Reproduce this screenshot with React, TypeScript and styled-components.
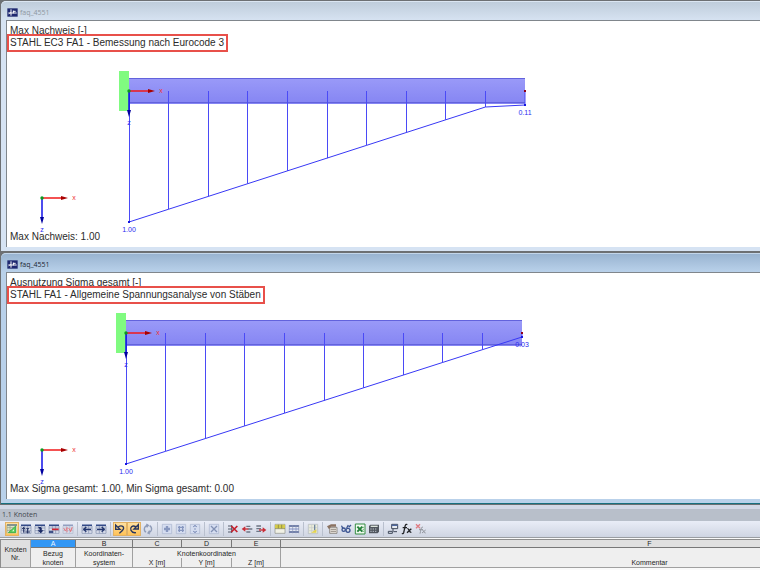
import React from "react";
import styled, { createGlobalStyle, css } from "styled-components";

const GlobalStyle = createGlobalStyle`
  * { box-sizing: border-box; }
  body {
    margin: 0;
    background: #eeeeee;
    font-family: "Liberation Sans", Arial, sans-serif;
    overflow: hidden;
  }
`;

const Page = styled.div`
  display: flex;
  flex-direction: column;
  height: 100vh;
  overflow: hidden;
`;

const Workspace = styled.main`
  display: flex;
  flex-direction: column;
  gap: 2px;
  padding: 1px 0 1px 1px;
  background: #6d7073;
`;

const Window = styled.section<{ $active?: boolean }>`
  display: flex;
  flex-direction: column;
  padding: 0 0 4px 5px;
  border-radius: 5px 0 0 0;
  background: ${(p) => (p.$active ? "#b9d1ea" : "#d6e3f3")};
  border-bottom: ${(p) => (p.$active ? "1px solid #17707f" : "0")};
`;

const TitleBar = styled.header<{ $active?: boolean }>`
  display: flex;
  align-items: center;
  gap: 2px;
  height: 19px;
  margin-left: -5px;
  padding: 3px 0 0 6px;
  border-top: 1px solid ${(p) => (p.$active ? "#c3d6ea" : "#dbe6f2")};
  border-radius: 5px 0 0 0;
  background: ${(p) =>
    p.$active
      ? "linear-gradient(#99b4d1, #b9d1ea)"
      : "linear-gradient(#bfcddb, #d6e2f1)"};
`;

const WindowTitle = styled.h2<{ $active?: boolean }>`
  margin: 0;
  font: 400 7px/10px "Open Sans", "Noto Sans", sans-serif;
  color: ${(p) => (p.$active ? "#1c2733" : "#8f98a2")};
`;

const Canvas = styled.div`
  display: grid;
  border: solid #80868c;
  border-width: 1px 0 0 1px;
  background: #ffffff;
`;

const Drawing = styled.svg`
  grid-area: 1 / 1;
  display: block;
  width: 100%;
  height: 226px;
`;

const Captions = styled.div`
  grid-area: 1 / 1;
  display: flex;
  flex-direction: column;
  align-items: flex-start;
  padding-top: 4px;
  color: #2b2b2b;
  font-size: 10px;
`;

const Quantity = styled.p`
  margin: 0;
  padding-left: 3px;
  height: 9px;
  line-height: 11px;
  overflow: hidden;
`;

const CaseLabel = styled.p`
  margin: 0;
  padding: 0 2px 0 1px;
  border: 2px solid #e8504a;
  line-height: 14px;
`;

const Summary = styled.p`
  margin: auto 0 4px;
  padding-left: 3px;
  line-height: 12px;
`;

const SvgLabel = styled.text`
  font: 400 7px "Liberation Sans", Arial, sans-serif;
  text-anchor: middle;
`;

function AppLogo() {
  return (
    <svg width="11" height="9" viewBox="0 0 33 27" aria-hidden="true">
      <path d="M1 1h31v25H1z" fill="#1e2870" />
      <path d="M12 4v19M4 15h25M18 10h8M19 8v8" stroke="#fff" strokeWidth="3" fill="none" />
      <path d="M5 18l7-6" stroke="#fff" strokeWidth="2" />
    </svg>
  );
}

function Axes({ x, y }: { x: number; y: number }) {
  return (
    <g>
      <path d={`M${x} ${y}h20`} stroke="#f01818" strokeWidth="1.5" />
      <path d={`M${x + 19} ${y - 2}l7 2l-7 2z`} fill="#a80000" />
      <path d={`M${x} ${y}v20`} stroke="#1010e8" strokeWidth="1.5" />
      <path d={`M${x - 2} ${y + 19}l2 7l2 -7z`} fill="#0000a0" />
      <circle cx={x} cy={y} r="1.7" fill="#0a9a20" />
      <SvgLabel x={x + 32} y={y + 2} fill="#ee3333">x</SvgLabel>
      <SvgLabel x={x} y={y + 34} fill="#2a2af0">z</SvgLabel>
    </g>
  );
}

type BeamProps = {
  id: string;
  x: number;
  y: number;
  values: number[];
  endLabel: string;
  endLabelY: number;
};

const SPAN = 396;

function Beam({ id, x, y, values, endLabel, endLabelY }: BeamProps) {
  const step = SPAN / (values.length - 1);
  const points = values.map((v, i) => [x + i * step, y + v]);
  const last = points[points.length - 1];
  return (
    <g>
      <defs>
        <linearGradient id={id} x1="0" y1="0" x2="0" y2="1">
          <stop offset="0" stopColor="#9a9af8" />
          <stop offset="1" stopColor="#8585f3" />
        </linearGradient>
      </defs>
      <rect x={x} y={y - 13} width={SPAN} height="26" fill={`url(#${id})`} />
      <path d={`M${x} ${y - 12.5}h${SPAN}M${x} ${y + 11.5}h${SPAN}`} stroke="#6262dc" />
      <rect x={x - 10} y={y - 20} width="10" height="40" fill="#80fb80" />
      {points.slice(0, -1).map(([px, py]) => (
        <path key={px} d={`M${Math.floor(px) + 0.5} ${y}V${py}`} stroke="#4a4af6" />
      ))}
      <path d={`M${last[0]} ${y}V${last[1]}`} stroke="#4a4af6" />
      <polyline points={points.map((p) => p.join(",")).join(" ")} fill="none" stroke="#3838f5" />
      <rect x={x - 1} y={y + values[0] - 1} width="2" height="2" fill="#1515e0" />
      <rect x={last[0] - 1} y={last[1] - 1} width="2" height="2" fill="#1515e0" />
      <rect x={last[0] - 1} y={y - 1} width="2" height="2" fill="#900018" />
      <Axes x={x} y={y} />
      <SvgLabel x={x} y={y + 141} fill="#2a2af0">1.00</SvgLabel>
      <SvgLabel x={last[0]} y={y + endLabelY} fill="#2a2af0">{endLabel}</SvgLabel>
    </g>
  );
}

type ResultProps = {
  active?: boolean;
  quantity: string;
  caseLabel: string;
  summary: string;
  beam: BeamProps;
};

function ResultWindow({ active, quantity, caseLabel, summary, beam }: ResultProps) {
  return (
    <Window $active={active}>
      <TitleBar $active={active}>
        <AppLogo />
        <WindowTitle $active={active}>faq_4551</WindowTitle>
      </TitleBar>
      <Canvas>
        <Drawing role="img" aria-label={caseLabel}>
          <Beam {...beam} />
          <Axes x={35} y={177} />
        </Drawing>
        <Captions>
          <Quantity>{quantity}</Quantity>
          <CaseLabel>{caseLabel}</CaseLabel>
          <Summary>{summary}</Summary>
        </Captions>
      </Canvas>
    </Window>
  );
}

const Panel = styled.section`
  display: flex;
  flex-direction: column;
  flex: 1;
  min-height: 0;
  overflow: hidden;
  background: #eeeeee;
`;

const PanelTitle = styled.h2`
  margin: 0;
  padding-left: 2px;
  border-top: 4px solid #d3d8e6;
  background: #b8bfca;
  color: #43474f;
  font: 400 7px/12px "Open Sans", "Noto Sans", sans-serif;
`;

const Toolbar = styled.div`
  display: flex;
  align-items: center;
  flex-shrink: 0;
  height: 16px;
  padding-left: 5px;
  background: linear-gradient(#e9edf7, #cfd5e2);
`;

const Group = styled.div`
  display: flex;
  & + & {
    margin-left: 2px;
    padding-left: 2px;
    border-left: 1px solid #b9c0ce;
  }
`;

const ToolButton = styled.button<{ $on?: boolean }>`
  display: flex;
  align-items: center;
  justify-content: center;
  width: 14px;
  height: 14px;
  padding: 0;
  border: 1px solid transparent;
  background: transparent;
  ${(p) =>
    p.$on &&
    css`
      border-color: #e2b265;
      background: linear-gradient(#ffe0a0, #ffc258);
    `}
`;

const Icon = styled.svg`
  display: block;
  width: 12px;
  height: 12px;
`;

const HeaderBars = ({ faded = false }: { faded?: boolean }) => (
  <g opacity={faded ? 0.45 : 1}>
    <path d="M3 5h30v26H3z" fill="#dfe4f0" />
    <path d="M3 7h30" stroke="#334a88" strokeWidth="5" />
    <path d="M3 15h30M3 23h30M3 31h30M3 9v22M13 9v22M23 9v22M33 9v22" stroke="#7f8bab" strokeWidth="2" />
  </g>
);

const PaleTile = () => <path d="M4 4h28v28H4z" fill="#d5ddf0" stroke="#a9b4cd" strokeWidth="2" />;

const TableRows = () => (
  <g>
    <path d="M3 6h30v25H3z" fill="#e6eaf4" />
    <path d="M3 9h30M3 27h30" stroke="#7482ac" strokeWidth="6" />
    <path d="M3 18h30" stroke="#a9b4dc" strokeWidth="5" />
    <path d="M4 6v25M14 6v25M24 6v25M32 6v25" stroke="#8792b0" strokeWidth="2" />
  </g>
);

type Tool = { name: string; on?: boolean; art: React.ReactNode };

const toolGroups: Tool[][] = [
  [
    {
      name: "Grafik",
      on: true,
      art: (
        <g>
          <path d="M3 4h30v27H3z" fill="#dfe6c8" />
          <path d="M3 6h30" stroke="#536a78" strokeWidth="4" />
          <path d="M3 14h20M3 22h12M12 7v18M3 6v25" stroke="#8f9a88" strokeWidth="2" />
          <path d="M7 29L29 9v20z" fill="#58d058" stroke="#239a36" strokeWidth="2" />
          <path d="M18 25l6-6v6z" fill="#e4f8d8" />
        </g>
      ),
    },
    {
      name: "Zeile ordnen",
      art: (
        <g>
          <HeaderBars />
          <path d="M11 29V14M6 19l5-6l5 6M16 27h14M23 17v14M19 17h8" stroke="#1f2e60" strokeWidth="3" fill="none" />
        </g>
      ),
    },
    {
      name: "Tabelle laden",
      art: (
        <g>
          <HeaderBars />
          <path d="M12 12h8q5 3 3 10h6l-9 9l-9-9h6q0-6-5-10z" fill="#1c2b66" />
        </g>
      ),
    },
    {
      name: "Linie bearbeiten",
      art: (
        <g>
          <HeaderBars />
          <path d="M12 19h20" stroke="#cf2434" strokeWidth="5" fill="none" />
          <path d="M3 27h13" stroke="#273a77" strokeWidth="5" />
        </g>
      ),
    },
    {
      name: "Ergebnisse",
      art: (
        <g>
          <HeaderBars faded />
          <path d="M5 15l5 9l5-9M15 12v16M20 15l5 9l6-12M25 27l5-10" stroke="#e47d86" strokeWidth="3" fill="none" />
        </g>
      ),
    },
  ],
  [
    { name: "Vorherige Tabelle", art: <g><HeaderBars /><path d="M30 19H9M16 12l-8 7l8 7" stroke="#22356f" strokeWidth="4" fill="none" /></g> },
    { name: "Nächste Tabelle", art: <g><HeaderBars /><path d="M6 19h21M20 12l8 7l-8 7" stroke="#22356f" strokeWidth="4" fill="none" /></g> },
  ],
  [
    { name: "Rückgängig", on: true, art: <path d="M5 6v13h13zM13 12c10-8 20 0 14 8c-2 4-6 7-11 11" stroke="#29375f" strokeWidth="4" fill="none" /> },
    { name: "Wiederherstellen", on: true, art: <path d="M31 5v13H18zM23 11C13 5 5 14 9 22c3 6 8 8 15 7" stroke="#29375f" strokeWidth="4" fill="none" /> },
    {
      name: "Aktualisieren",
      art: <path d="M12 28C3 21 7 8 17 7M13 3l6 4l-5 6M23 8c10 7 6 20-4 22M24 33l-6-3l5-7" stroke="#8f9cb8" strokeWidth="4" fill="none" />,
    },
  ],
  [
    { name: "Einfügen", art: <g><PaleTile /><path d="M18 9v18M9 18h18" stroke="#8797bf" strokeWidth="7" /></g> },
    { name: "Kopieren", art: <g><PaleTile /><path d="M9 13h18M9 22h18M13 9v18M23 9v18" stroke="#8797bf" strokeWidth="4" /></g> },
    { name: "Aufteilen", art: <g><PaleTile /><path d="M18 6v6M18 15v6M18 24v6M12 12l6-5l6 5M12 24l6 5l6-5" stroke="#8797bf" strokeWidth="3" fill="none" /></g> },
  ],
  [{ name: "Leeren", art: <g><PaleTile /><path d="M9 9l18 18M27 9L9 27" stroke="#8291b4" strokeWidth="4" /></g> }],
  [
    {
      name: "Zeile löschen",
      art: <g><path d="M3 9h12M3 18h14M3 27h12M14 6v24" stroke="#555d6c" strokeWidth="3" /><path d="M13 9l18 18M31 9L13 27" stroke="#c51f2d" strokeWidth="5" /></g>,
    },
    {
      name: "Zeile davor",
      art: <g><path d="M16 10h12M20 18h14M16 27h12" stroke="#6d7585" strokeWidth="4" /><path d="M22 18H9" stroke="#c92d37" strokeWidth="4" /><path d="M2 18l11-8v16z" fill="#c92d37" /></g>,
    },
    {
      name: "Zeile danach",
      art: <g><path d="M4 9h14M4 17h14M4 25h14" stroke="#6d7585" strokeWidth="4" /><path d="M12 21h14" stroke="#c92d37" strokeWidth="4" /><path d="M34 21l-11-8v16z" fill="#c92d37" /></g>,
    },
  ],
  [
    {
      name: "Spalten",
      art: <g><path d="M3 4h30v27H3z" fill="#f1f1e5" stroke="#8c8f86" strokeWidth="2" /><path d="M3 5h30v11H3z" fill="#d3ca4b" /><path d="M3 17h30M13 5v11M23 5v11" stroke="#77773f" strokeWidth="2" /></g>,
    },
    { name: "Zeilen", art: <TableRows /> },
  ],
  [
    {
      name: "Markieren",
      art: <g><path d="M4 4h28v28H4z" fill="#e8ebd9" stroke="#b0b6bd" strokeWidth="2" /><path d="M4 14h28M4 23h28M14 4v28" stroke="#c7cbcd" strokeWidth="2" /><path d="M23 5v17" stroke="#71869e" strokeWidth="4" /><path d="M12 29l16-10v10z" fill="#e5d34c" /></g>,
    },
  ],
  [
    {
      name: "Eigenschaften",
      art: <g><path d="M11 13h22v18H11z" fill="#e9e4dc" stroke="#6d6661" strokeWidth="2" /><path d="M14 19h16M14 25h16" stroke="#938c86" strokeWidth="3" /><path d="M3 10l12-6h15v7H15l-6 8z" fill="#8a7262" /></g>,
    },
    {
      name: "Suchen",
      art: <g fill="none" stroke="#3a5391" strokeWidth="4"><path d="M4 9c3 1 2 6 6 7M20 15l5-9M26 13l7-7" /><circle cx="11" cy="20" r="5" /><circle cx="24" cy="22" r="6" /></g>,
    },
    {
      name: "Excel",
      art: <g><path d="M4 3h29v30H4z" fill="#f1faf0" stroke="#358d44" strokeWidth="3" /><path d="M10 11l15 15M25 11L10 26" stroke="#23813a" strokeWidth="6" /><path d="M26 13h4M26 19h4M26 25h4" stroke="#358d44" strokeWidth="2" /></g>,
    },
    {
      name: "Rechner",
      art: <g><path d="M3 9l4-4h26v21l-4 5H3z" fill="#50565f" /><path d="M8 10h21" stroke="#dce4dc" strokeWidth="4" /><path d="M7 18h20M7 25h20" stroke="#bac0c8" strokeWidth="3" strokeDasharray="4 3" /></g>,
    },
  ],
  [
    {
      name: "Formeleinstellungen",
      art: <g fill="none" stroke="#3e4758"><path d="M14 4h18v13H14z" fill="#e8ecf3" strokeWidth="3" /><path d="M14 7h18" stroke="#4f68a0" strokeWidth="4" /><path d="M18 17v8M4 25h12v6H4zM19 26h11" strokeWidth="3" /></g>,
    },
    {
      name: "Funktion",
      art: <path d="M19 5c-6-3-7 4-8 11l-3 13c-1 3-3 4-5 2M5 14h13M19 17c5-2 5 12 12 11M31 17L18 29" stroke="#202226" strokeWidth="4" fill="none" />,
    },
    {
      name: "Funktion löschen",
      art: <g fill="none"><path d="M24 13c-6-3-6 7-9 19M12 20h12M22 21c5 0 4 10 10 9M32 21L21 30" stroke="#92969e" strokeWidth="3" /><path d="M3 4l12 12M15 4L3 16" stroke="#df7b83" strokeWidth="4" /></g>,
    },
  ],
];

const TableFrame = styled.div`
  flex: 1;
  min-height: 0;
  overflow: hidden;
  border-top: 1px solid #9a9da2;
  padding-top: 1px;
  background: #fafafa;
`;

const NodeTable = styled.table`
  width: 1019px;
  table-layout: fixed;
  border-collapse: separate;
  border-spacing: 0;
  border-top: 1px solid #8d8d8d;
  border-left: 1px solid #8d8d8d;
  color: #262626;
  font-size: 7px;
`;

const Col = styled.col<{ $w?: number }>`
  width: ${(p) => (p.$w ? `${p.$w}px` : "auto")};
`;

const Cell = styled.th<{ $kind?: "letter" | "selected" | "corner" | "top" }>`
  height: 10px;
  padding: 0;
  overflow: hidden;
  text-align: center;
  white-space: nowrap;
  font-weight: 400;
  line-height: 9px;
  background: #efefef;
  border-right: 1px solid #a0a0a0;
  border-bottom: 1px solid #a0a0a0;
  ${(p) => p.$kind === "top" && css`border-bottom: 0;`}
  ${(p) => p.$kind === "corner" && css`background: #e0e0e0; line-height: 8px;`}
  ${(p) =>
    (p.$kind === "letter" || p.$kind === "selected") &&
    css`
      height: 8px;
      line-height: 7px;
      border-color: #777777;
      background: ${p.$kind === "selected" ? "#3297f5" : "#e0e0e0"};
      color: ${p.$kind === "selected" ? "#e8f3ff" : "#262626"};
    `}
`;

const linear = (from: number, to: number, n: number) =>
  Array.from({ length: n }, (_, i) => from + ((to - from) * i) / (n - 1));

export default function App() {
  return (
    <Page>
      <GlobalStyle />
      <Workspace>
        <ResultWindow
          quantity="Max Nachweis [-]"
          caseLabel="STAHL EC3 FA1 - Bemessung nach Eurocode 3"
          summary="Max Nachweis: 1.00"
          beam={{ id: "beam-ec3", x: 122, y: 70, values: [...linear(131, 16, 10), 14], endLabel: "0.11", endLabelY: 24 }}
        />
        <ResultWindow
          active
          quantity="Ausnutzung Sigma gesamt [-]"
          caseLabel="STAHL FA1 - Allgemeine Spannungsanalyse von Stäben"
          summary="Max Sigma gesamt: 1.00, Min Sigma gesamt: 0.00"
          beam={{ id: "beam-stress", x: 119, y: 60, values: linear(131, 4, 11), endLabel: "0.03", endLabelY: 14 }}
        />
      </Workspace>
      <Panel>
        <PanelTitle>1.1 Knoten</PanelTitle>
        <Toolbar role="toolbar" aria-label="Tabellenwerkzeuge">
          {toolGroups.map((group) => (
            <Group key={group[0].name}>
              {group.map((tool) => (
                <ToolButton key={tool.name} $on={tool.on} aria-label={tool.name} aria-pressed={!!tool.on}>
                  <Icon viewBox="0 0 36 36" aria-hidden="true">{tool.art}</Icon>
                </ToolButton>
              ))}
            </Group>
          ))}
        </Toolbar>
        <TableFrame>
          <NodeTable>
            <colgroup>
              <Col $w={30} />
              <Col $w={45} />
              <Col $w={57} />
              <Col $w={49} />
              <Col $w={50} />
              <Col $w={49} />
              <Col />
            </colgroup>
            <thead>
              <tr>
                <Cell rowSpan={3} $kind="corner">Knoten<br />Nr.</Cell>
                <Cell $kind="selected">A</Cell>
                {["B", "C", "D", "E", "F"].map((letter) => (
                  <Cell key={letter} $kind="letter">{letter}</Cell>
                ))}
              </tr>
              <tr>
                <Cell $kind="top">Bezug</Cell>
                <Cell $kind="top">Koordinaten-</Cell>
                <Cell $kind="top" colSpan={3}>Knotenkoordinaten</Cell>
                <Cell $kind="top" />
              </tr>
              <tr>
                <Cell>knoten</Cell>
                <Cell>system</Cell>
                <Cell>X [m]</Cell>
                <Cell>Y [m]</Cell>
                <Cell>Z [m]</Cell>
                <Cell>Kommentar</Cell>
              </tr>
            </thead>
          </NodeTable>
        </TableFrame>
      </Panel>
    </Page>
  );
}
